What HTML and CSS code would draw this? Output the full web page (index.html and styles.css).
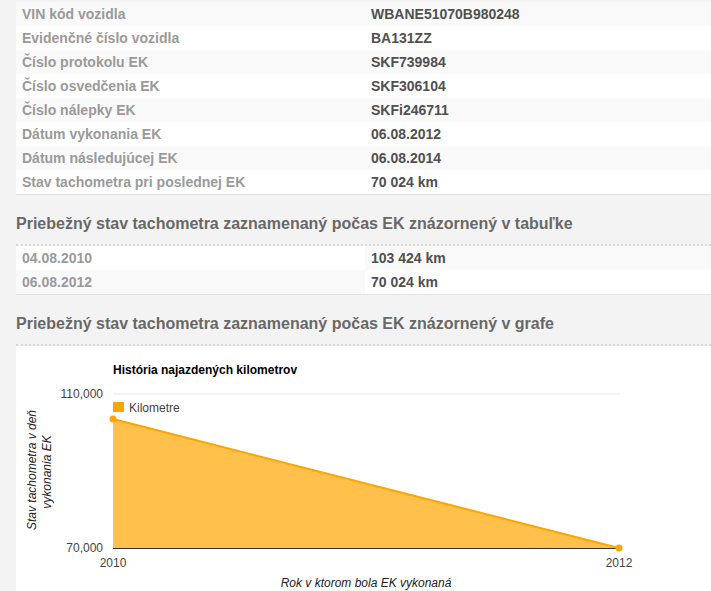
FILE: index.html
```html
<!DOCTYPE html>
<html lang="sk">
<head>
    <meta charset="UTF-8">
    <meta name="viewport" content="width=device-width, initial-scale=1.0">
    <title>História vozidla</title>
    <link rel="stylesheet" href="styles.css">
</head>
<body>

<div class="page">
    <table class="info">
        <tr><td class="label">VIN kód vozidla</td><td class="value">WBANE51070B980248</td></tr>
        <tr><td class="label">Evidenčné číslo vozidla</td><td class="value">BA131ZZ</td></tr>
        <tr><td class="label">Číslo protokolu EK</td><td class="value">SKF739984</td></tr>
        <tr><td class="label">Číslo osvedčenia EK</td><td class="value">SKF306104</td></tr>
        <tr><td class="label">Číslo nálepky EK</td><td class="value">SKFi246711</td></tr>
        <tr><td class="label">Dátum vykonania EK</td><td class="value">06.08.2012</td></tr>
        <tr><td class="label">Dátum následujúcej EK</td><td class="value">06.08.2014</td></tr>
        <tr><td class="label">Stav tachometra pri poslednej EK</td><td class="value">70 024 km</td></tr>
    </table>

    <h2 class="section-title">Priebežný stav tachometra zaznamenaný počas EK znázornený v tabuľke</h2>

    <table class="info history">
        <tr><td class="label">04.08.2010</td><td class="value">103 424 km</td></tr>
        <tr><td class="label">06.08.2012</td><td class="value">70 024 km</td></tr>
    </table>

    <h2 class="section-title">Priebežný stav tachometra zaznamenaný počas EK znázornený v grafe</h2>

    <div class="chart-box">
        <svg class="chart" width="695" height="250" viewBox="0 0 695 250">
            <text class="chart-title" x="97" y="28">História najazdených kilometrov</text>

            <line x1="97" y1="48" x2="604" y2="48" stroke="#e8e8e8" stroke-width="1"/>

            <path d="M97,73 L603,202 L97,202 Z" fill="#ffc04c"/>
            <line x1="97" y1="202.5" x2="604" y2="202.5" stroke="#333" stroke-width="1"/>
            <line x1="97" y1="73" x2="603" y2="202" stroke="#ffa500" stroke-width="2"/>
            <circle cx="97" cy="73" r="3.5" fill="#ffa500"/>
            <circle cx="603" cy="202" r="3.5" fill="#ffa500"/>

            <rect x="97" y="56" width="11" height="10" fill="#ffa500"/>
            <text class="axis" x="113" y="66">Kilometre</text>

            <text class="axis" x="87" y="52" text-anchor="end">110,000</text>
            <text class="axis" x="87" y="206" text-anchor="end">70,000</text>
            <text class="axis" x="97" y="221" text-anchor="middle">2010</text>
            <text class="axis" x="603" y="221" text-anchor="middle">2012</text>

            <text class="axis-title" x="350" y="241" text-anchor="middle">Rok v ktorom bola EK vykonaná</text>
            <text class="axis-title" text-anchor="middle" transform="translate(19.5,124) rotate(-90)">Stav tachometra v deň</text>
            <text class="axis-title" text-anchor="middle" transform="translate(35,126) rotate(-90)">vykonania EK</text>
        </svg>
    </div>
</div>

</body>
</html>
```

FILE: styles.css
```css
body {
    margin: 0;
    padding: 0;
    background: #f3f3f3;
    font-family: 'Liberation Sans', Arial, sans-serif;
}

.page {
    padding: 2px 0 0 16px;
}

.info {
    width: 100%;
    border-collapse: collapse;
    background: #fff;
    border-bottom: 1px solid #e2e2e2;
}

.info td {
    height: 24px;
    padding: 0 6px;
    font-size: 14px;
    font-weight: bold;
    vertical-align: middle;
    white-space: nowrap;
}

.info tr:nth-child(odd) {
    background: #f9f9f9;
}

.info .label {
    width: 337px;
    color: #9a9a9a;
}

.info .value {
    color: #505050;
}

/* druha tabulka ma prehodene pruhy v stlpci s hodnotou */
.history tr:nth-child(odd) {
    background: #fff;
}

.history tr:nth-child(odd) .value {
    background: #f9f9f9;
}

.history tr:nth-child(even) .label {
    background: #f9f9f9;
}

.section-title {
    margin: 0;
    padding: 19px 0 10px;
    line-height: 20px;
    font-size: 16px;
    font-weight: bold;
    color: #686868;
    border-bottom: 2px dotted #dadada;
}

.chart-box {
    background: #fff;
    height: 260px;
}

.chart {
    display: block;
    font-family: 'Liberation Sans', Arial, sans-serif;
}

.chart-title {
    font-size: 12px;
    font-weight: bold;
    fill: #000;
}

.axis {
    font-size: 12px;
    fill: #444;
}

.axis-title {
    font-size: 12px;
    font-style: italic;
    fill: #222;
}
```
